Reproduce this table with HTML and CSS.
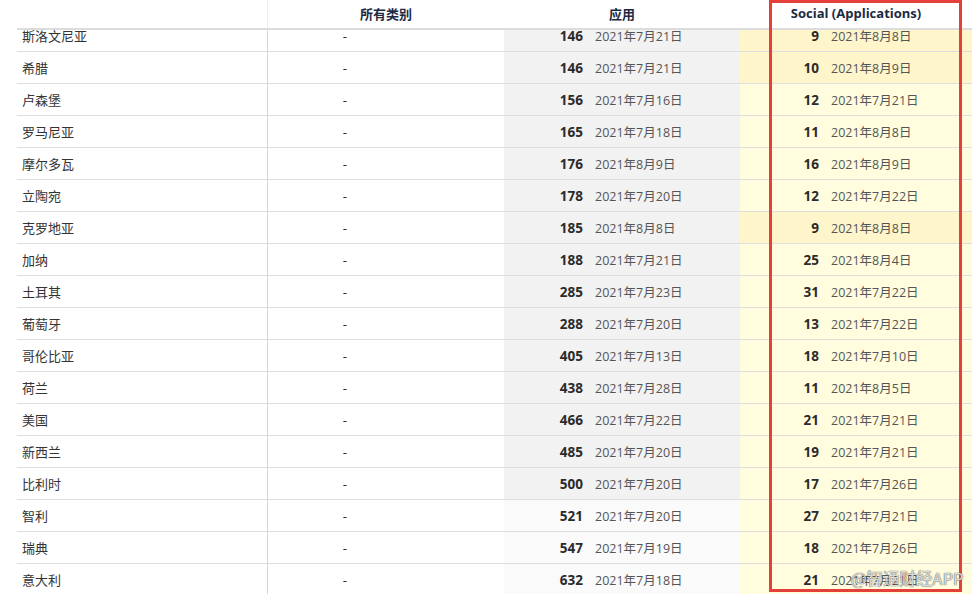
FILE: index.html
```html
<!DOCTYPE html>
<html lang="zh-CN">
<head>
<meta charset="utf-8">
<title>排名</title>
<link rel="stylesheet" href="styles.css">
</head>
<body>
<div class="table">
  <div class="head">
    <div class="c c1"></div>
    <div class="c c2">所有类别</div>
    <div class="c c3">应用</div>
    <div class="c c4">Social (Applications)</div>
  </div>
  <div class="row partial"><div class="in">
    <div class="c c1">斯洛文尼亚</div>
    <div class="c c2"><span class="n">-</span></div>
    <div class="c c3 g"><span class="n">146</span><span class="d">2021年7月21日</span></div>
    <div class="c c4 yh"><span class="n">9</span><span class="d">2021年8月8日</span></div>
  </div></div>
  <div class="row">
    <div class="c c1">希腊</div>
    <div class="c c2"><span class="n">-</span></div>
    <div class="c c3 g"><span class="n">146</span><span class="d">2021年7月21日</span></div>
    <div class="c c4 yh"><span class="n">10</span><span class="d">2021年8月9日</span></div>
  </div>
  <div class="row">
    <div class="c c1">卢森堡</div>
    <div class="c c2"><span class="n">-</span></div>
    <div class="c c3 g"><span class="n">156</span><span class="d">2021年7月16日</span></div>
    <div class="c c4 y"><span class="n">12</span><span class="d">2021年7月21日</span></div>
  </div>
  <div class="row">
    <div class="c c1">罗马尼亚</div>
    <div class="c c2"><span class="n">-</span></div>
    <div class="c c3 g"><span class="n">165</span><span class="d">2021年7月18日</span></div>
    <div class="c c4 y"><span class="n">11</span><span class="d">2021年8月8日</span></div>
  </div>
  <div class="row">
    <div class="c c1">摩尔多瓦</div>
    <div class="c c2"><span class="n">-</span></div>
    <div class="c c3 g"><span class="n">176</span><span class="d">2021年8月9日</span></div>
    <div class="c c4 y"><span class="n">16</span><span class="d">2021年8月9日</span></div>
  </div>
  <div class="row">
    <div class="c c1">立陶宛</div>
    <div class="c c2"><span class="n">-</span></div>
    <div class="c c3 g"><span class="n">178</span><span class="d">2021年7月20日</span></div>
    <div class="c c4 y"><span class="n">12</span><span class="d">2021年7月22日</span></div>
  </div>
  <div class="row">
    <div class="c c1">克罗地亚</div>
    <div class="c c2"><span class="n">-</span></div>
    <div class="c c3 g"><span class="n">185</span><span class="d">2021年8月8日</span></div>
    <div class="c c4 yh"><span class="n">9</span><span class="d">2021年8月8日</span></div>
  </div>
  <div class="row">
    <div class="c c1">加纳</div>
    <div class="c c2"><span class="n">-</span></div>
    <div class="c c3 g"><span class="n">188</span><span class="d">2021年7月21日</span></div>
    <div class="c c4 y"><span class="n">25</span><span class="d">2021年8月4日</span></div>
  </div>
  <div class="row">
    <div class="c c1">土耳其</div>
    <div class="c c2"><span class="n">-</span></div>
    <div class="c c3 g"><span class="n">285</span><span class="d">2021年7月23日</span></div>
    <div class="c c4 y"><span class="n">31</span><span class="d">2021年7月22日</span></div>
  </div>
  <div class="row">
    <div class="c c1">葡萄牙</div>
    <div class="c c2"><span class="n">-</span></div>
    <div class="c c3 g"><span class="n">288</span><span class="d">2021年7月20日</span></div>
    <div class="c c4 y"><span class="n">13</span><span class="d">2021年7月22日</span></div>
  </div>
  <div class="row">
    <div class="c c1">哥伦比亚</div>
    <div class="c c2"><span class="n">-</span></div>
    <div class="c c3 g"><span class="n">405</span><span class="d">2021年7月13日</span></div>
    <div class="c c4 y"><span class="n">18</span><span class="d">2021年7月10日</span></div>
  </div>
  <div class="row">
    <div class="c c1">荷兰</div>
    <div class="c c2"><span class="n">-</span></div>
    <div class="c c3 g"><span class="n">438</span><span class="d">2021年7月28日</span></div>
    <div class="c c4 y"><span class="n">11</span><span class="d">2021年8月5日</span></div>
  </div>
  <div class="row">
    <div class="c c1">美国</div>
    <div class="c c2"><span class="n">-</span></div>
    <div class="c c3 g"><span class="n">466</span><span class="d">2021年7月22日</span></div>
    <div class="c c4 y"><span class="n">21</span><span class="d">2021年7月21日</span></div>
  </div>
  <div class="row">
    <div class="c c1">新西兰</div>
    <div class="c c2"><span class="n">-</span></div>
    <div class="c c3 g"><span class="n">485</span><span class="d">2021年7月20日</span></div>
    <div class="c c4 y"><span class="n">19</span><span class="d">2021年7月21日</span></div>
  </div>
  <div class="row">
    <div class="c c1">比利时</div>
    <div class="c c2"><span class="n">-</span></div>
    <div class="c c3 g"><span class="n">500</span><span class="d">2021年7月20日</span></div>
    <div class="c c4 y"><span class="n">17</span><span class="d">2021年7月26日</span></div>
  </div>
  <div class="row">
    <div class="c c1">智利</div>
    <div class="c c2"><span class="n">-</span></div>
    <div class="c c3 gl"><span class="n">521</span><span class="d">2021年7月20日</span></div>
    <div class="c c4 y"><span class="n">27</span><span class="d">2021年7月21日</span></div>
  </div>
  <div class="row">
    <div class="c c1">瑞典</div>
    <div class="c c2"><span class="n">-</span></div>
    <div class="c c3 gl"><span class="n">547</span><span class="d">2021年7月19日</span></div>
    <div class="c c4 y"><span class="n">18</span><span class="d">2021年7月26日</span></div>
  </div>
  <div class="row">
    <div class="c c1">意大利</div>
    <div class="c c2"><span class="n">-</span></div>
    <div class="c c3 gl"><span class="n">632</span><span class="d">2021年7月18日</span></div>
    <div class="c c4 y"><span class="n">21</span><span class="d">2021年7月21日</span></div>
  </div>
</div>
<div class="mark"></div>
<div class="watermark">@智通财经APP</div>
</body>
</html>
```
FILE: styles.css
```css
html, body {
  margin: 0;
  padding: 0;
  width: 972px;
  height: 594px;
  overflow: hidden;
  background: #fff;
}
body {
  position: relative;
  font-family: "Open Sans", "Noto Sans CJK SC", sans-serif;
  color: #333;
}
.table {
  margin-left: 17px;
  display: flex;
  flex-direction: column;
}
.head {
  display: flex;
  height: 30px;
  box-sizing: border-box;
  border-bottom: 2px solid #dcdcdc;
  background: #fff;
}
.head .c {
  justify-content: center;
  font-weight: 700;
  font-size: 13px;
  color: #1c2a45;
  padding-bottom: 2px;
}
.head .c1 {
  border-right: 1px solid #efefef;
}
.c {
  display: flex;
  align-items: center;
  box-sizing: border-box;
  height: 100%;
}
.c1 {
  width: 251px;
  padding-left: 5px;
  font-size: 13px;
  color: #333;
  border-right: 1px solid #d4d4d4;
  font-family: "Noto Sans CJK SC", sans-serif;
}
.c2, .c3 {
  width: 236px;
}
.c4 {
  flex: 1;
}
.row {
  display: flex;
  height: 32px;
  box-sizing: border-box;
  border-bottom: 1px solid #dedede;
}
.row.partial {
  height: 22px;
  overflow: hidden;
  align-items: flex-end;
}
.row.partial .in {
  display: flex;
  flex: 1;
  height: 31px;
  flex-shrink: 0;
}
.row .c2 .n {
  font-weight: 400;
}
.n {
  width: 79px;
  text-align: right;
  font-weight: 700;
  font-size: 13.5px;
  color: #2b2b2b;
  flex-shrink: 0;
}
.d {
  margin-left: 12px;
  font-size: 12.5px;
  color: #555;
  font-family: "Open Sans", "Noto Sans CJK SC", sans-serif;
}
.g { background: #f2f2f2; }
.gl { background: #fafafa; }
.y { background: #fffddd; }
.yh { background: #fff5ca; }
.mark {
  position: absolute;
  left: 769px;
  top: 0;
  width: 193px;
  height: 592px;
  box-sizing: border-box;
  border: 3px solid #e4403a;
}
.watermark {
  position: absolute;
  left: 851px;
  top: 566px;
  font-family: "Noto Sans CJK SC", sans-serif;
  font-size: 16.5px;
  color: rgba(255, 255, 255, 0.8);
  text-shadow: 0 0 1px rgba(80, 80, 80, 0.9), 0 0 1px rgba(80, 80, 80, 0.9);
}
```
